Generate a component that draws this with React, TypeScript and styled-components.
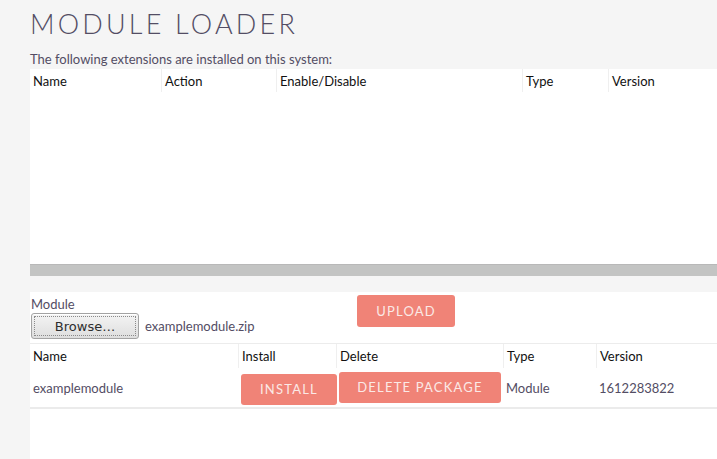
import React from 'react';
import styled, { createGlobalStyle } from 'styled-components';

const GlobalStyle = createGlobalStyle`
  html, body {
    margin: 0;
    padding: 0;
    background: #f5f5f5;
    font-family: Lato, 'Open Sans', sans-serif;
    overflow: hidden;
  }
`;

const textColor = '#534d64';
const accent = '#f08377';

const installedColumns = [
  { title: 'Name', width: 131 },
  { title: 'Action', width: 115 },
  { title: 'Enable/Disable', width: 246 },
  { title: 'Type', width: 86 },
  { title: 'Version', width: 120 },
];

const packageColumns = [
  { title: 'Name', width: 208 },
  { title: 'Install', width: 98 },
  { title: 'Delete', width: 167 },
  { title: 'Type', width: 93 },
  { title: 'Version', width: 130 },
];

export default function App() {
  return (
    <>
      <GlobalStyle />
      <Page>
        <Title>MODULE LOADER</Title>
        <Intro>The following extensions are installed on this system:</Intro>

        <InstalledPanel>
          <HeaderRow>
            {installedColumns.map(col => (
              <HeaderCell key={col.title} $width={col.width}>
                {col.title}
              </HeaderCell>
            ))}
          </HeaderRow>
        </InstalledPanel>
        <ScrollTrack />

        <UploadPanel>
          <UploadForm>
            <FileField>
              <FieldLabel>Module</FieldLabel>
              <FileRow>
                <BrowseButton type="button">
                  <BrowseInner>Browse…</BrowseInner>
                </BrowseButton>
                <FileName>examplemodule.zip</FileName>
              </FileRow>
            </FileField>
            <ActionButton $width={98} $height={32}>
              UPLOAD
            </ActionButton>
          </UploadForm>

          <PackageTable>
            <PackageHeader>
              {packageColumns.map(col => (
                <HeaderCell key={col.title} $width={col.width}>
                  {col.title}
                </HeaderCell>
              ))}
            </PackageHeader>
            <PackageRow>
              <DataCell $width={208}>examplemodule</DataCell>
              <DataCell $width={98} $offset={3}>
                <ActionButton $width={96} $height={31}>
                  INSTALL
                </ActionButton>
              </DataCell>
              <DataCell $width={167} $offset={-1}>
                <ActionButton $width={162} $height={31}>
                  DELETE PACKAGE
                </ActionButton>
              </DataCell>
              <DataCell $width={93}>Module</DataCell>
              <DataCell $width={130}>1612283822</DataCell>
            </PackageRow>
          </PackageTable>
        </UploadPanel>
      </Page>
    </>
  );
}

const Page = styled.div`
  display: flex;
  flex-direction: column;
  height: 459px;
  padding-left: 30px;
  box-sizing: border-box;
`;

const Title = styled.h1`
  margin: 9px 0 0 0;
  font-family: Lato, sans-serif;
  font-weight: 300;
  font-size: 27px;
  line-height: 30px;
  letter-spacing: 3.2px;
  color: ${textColor};
`;

const Intro = styled.div`
  margin-top: 12px;
  font-size: 13px;
  line-height: 16px;
  color: ${textColor};
`;

const InstalledPanel = styled.div`
  margin-top: 2px;
  height: 195px;
  background: #fff;
  overflow: hidden;
`;

const HeaderRow = styled.div`
  display: flex;
  height: 23px;
  white-space: nowrap;
`;

const HeaderCell = styled.div<{ $width: number }>`
  flex: 0 0 ${p => p.$width}px;
  min-width: 0;
  box-sizing: border-box;
  padding: 4px 3px 0;
  font-size: 13px;
  line-height: 16px;
  color: #111;
  & + & {
    border-left: 1px solid #efefef;
  }
`;

const ScrollTrack = styled.div`
  height: 12px;
  background: #c3c4c3;
  border-top: 1px solid #b8b8b8;
  box-sizing: border-box;
`;

const UploadPanel = styled.div`
  margin-top: 16px;
  flex: 1;
  background: #fff;
`;

const UploadForm = styled.div`
  display: flex;
  align-items: flex-start;
  padding-top: 3px;
  height: 48px;
`;

const FileField = styled.div`
  width: 327px;
  display: flex;
  flex-direction: column;
  padding-top: 2px;
`;

const FieldLabel = styled.div`
  padding-left: 1px;
  font-size: 13px;
  line-height: 15px;
  color: ${textColor};
`;

const FileRow = styled.div`
  display: flex;
  align-items: center;
  padding-left: 1px;
  margin-top: 1px;
`;

const BrowseButton = styled.button`
  width: 108px;
  height: 26px;
  padding: 2px;
  border: 1px solid #a3a3a3;
  border-radius: 3px;
  background: linear-gradient(#f4f4f4, #dedede);
  box-shadow: inset 0 1px 0 #fff;
  font-family: 'DejaVu Sans', sans-serif;
  font-size: 13px;
  color: #2e2e2e;
  cursor: pointer;
`;

const BrowseInner = styled.span`
  display: flex;
  align-items: center;
  justify-content: center;
  height: 100%;
  border: 1px dotted #8a8a8a;
  box-sizing: border-box;
`;

const FileName = styled.span`
  margin-left: 6px;
  font-size: 13px;
  color: ${textColor};
`;

const ActionButton = styled.div<{ $width: number; $height: number }>`
  display: flex;
  align-items: center;
  justify-content: center;
  box-sizing: border-box;
  width: ${p => p.$width}px;
  height: ${p => p.$height}px;
  background: ${accent};
  border-radius: 3px;
  color: #fbe9e6;
  font-size: 13px;
  letter-spacing: 1.2px;
  white-space: nowrap;
  cursor: pointer;
`;

const PackageTable = styled.div`
  border-top: 1px solid #ececec;
`;

const PackageHeader = styled(HeaderRow)`
  height: 24px;
`;

const PackageRow = styled.div`
  display: flex;
  align-items: center;
  height: 41px;
  border-bottom: 2px solid #ebebeb;
  box-sizing: border-box;
`;

const DataCell = styled.div<{ $width: number; $offset?: number }>`
  flex: 0 0 ${p => p.$width}px;
  min-width: 0;
  box-sizing: border-box;
  padding: 0 3px;
  margin-top: ${p => p.$offset ?? 0}px;
  font-size: 13px;
  color: ${textColor};
  white-space: nowrap;
`;
